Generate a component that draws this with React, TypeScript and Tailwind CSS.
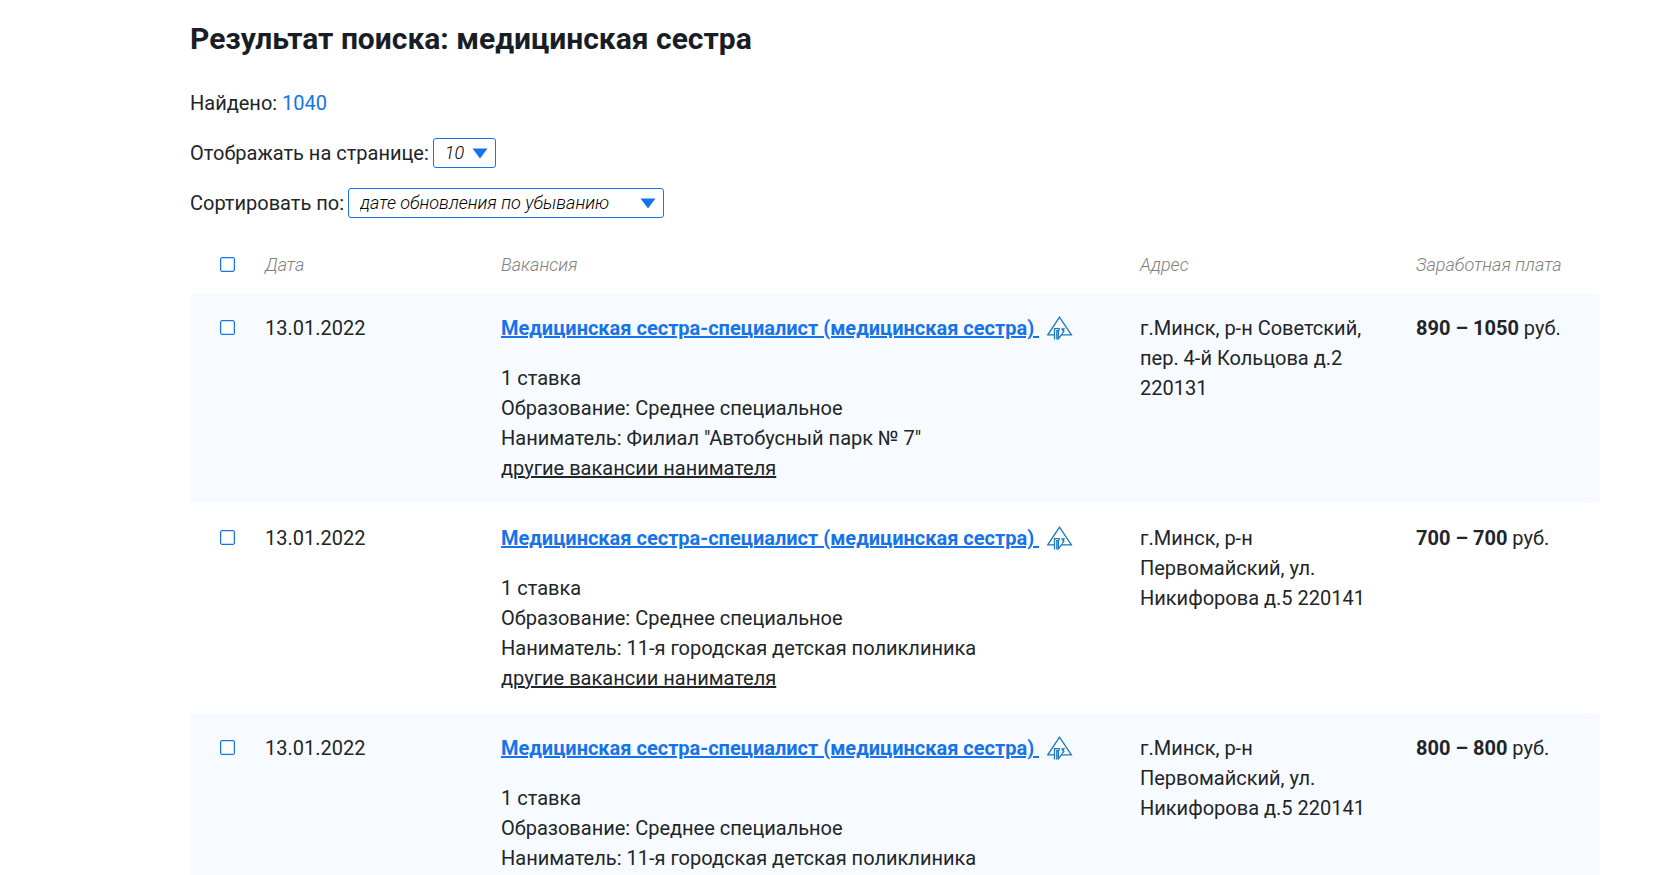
import { useState } from 'react';
import type { ReactNode } from 'react';

interface Vacancy {
  id: number;
  date: string;
  title: string;
  positions: string;
  education: string;
  employer: string;
  address: string;
  salary: string;
}

const vacancies: Vacancy[] = [
  {
    id: 1,
    date: '13.01.2022',
    title: 'Медицинская сестра-специалист (медицинская сестра)',
    positions: '1 ставка',
    education: 'Среднее специальное',
    employer: 'Филиал "Автобусный парк № 7"',
    address: 'г.Минск, р-н Советский, пер. 4-й Кольцова д.2 220131',
    salary: '890 – 1050',
  },
  {
    id: 2,
    date: '13.01.2022',
    title: 'Медицинская сестра-специалист (медицинская сестра)',
    positions: '1 ставка',
    education: 'Среднее специальное',
    employer: '11-я городская детская поликлиника',
    address: 'г.Минск, р-н Первомайский, ул. Никифорова д.5 220141',
    salary: '700 – 700',
  },
  {
    id: 3,
    date: '13.01.2022',
    title: 'Медицинская сестра-специалист (медицинская сестра)',
    positions: '1 ставка',
    education: 'Среднее специальное',
    employer: '11-я городская детская поликлиника',
    address: 'г.Минск, р-н Первомайский, ул. Никифорова д.5 220141',
    salary: '800 – 800',
  },
];

function EmploymentServiceIcon() {
  return (
    <svg
      className="ml-2 inline-block h-[25px] w-[26px] align-[-6px]"
      viewBox="0 0 26 25"
      fill="none"
      stroke="#1b78bd"
      strokeWidth="1.3"
      aria-hidden="true"
    >
      <path d="M7.5 18.8H0.8L12.5 1.2L24.4 18.8H14.4" />
      <path d="M7.5 23.5V12.6H12.2V14.6" />
      <path d="M9.8 23.5V14.6H11.4V22.6L15.6 17.4" />
      <path d="M14.2 12.8H17L15.8 14.4C17.6 14.8 17.2 16.6 15.2 16.5" />
    </svg>
  );
}

interface SelectProps {
  id: string;
  label: string;
  width: string;
  children: ReactNode;
}

function Select({ id, label, width, children }: SelectProps) {
  return (
    <div className="flex items-center gap-1">
      <label htmlFor={id}>{label}</label>
      <span className="relative flex">
        <select
          id={id}
          className={`h-[30px] appearance-none rounded-[3px] border border-[#1673ea] bg-white pr-7 pl-[11px] text-[18px] leading-7 font-light text-black italic ${width}`}
        >
          {children}
        </select>
        <svg className="pointer-events-none absolute top-[10px] right-2 h-[11px] w-4" viewBox="0 0 16 11" aria-hidden="true">
          <path d="M0.5 0.5H15.5L8 10.5Z" fill="#1673ea" />
        </svg>
      </span>
    </div>
  );
}

interface CheckboxProps {
  label: string;
  checked: boolean;
  onChange: () => void;
}

function Checkbox({ label, checked, onChange }: CheckboxProps) {
  return (
    <input
      type="checkbox"
      aria-label={label}
      checked={checked}
      onChange={onChange}
      className="block size-[15px] appearance-none rounded-[2px] border border-[#1673ea] bg-white inset-ring inset-ring-[#c5dcfa] checked:bg-[#1673ea]"
    />
  );
}

export default function App() {
  const [selected, setSelected] = useState<number[]>([]);
  const allSelected = selected.length === vacancies.length;

  const toggle = (id: number) =>
    setSelected((ids) => (ids.includes(id) ? ids.filter((i) => i !== id) : [...ids, id]));

  return (
    <main className="bg-white pr-[76px] pl-[190px] font-[Roboto,sans-serif] text-[20px] leading-[30px] text-[#212529]">
      <h1 className="pt-5 text-[30px] leading-[38px] font-bold text-[#181d26]">
        Результат поиска: медицинская сестра
      </h1>

      <div className="mt-[30px] flex flex-col gap-5">
        <p>
          Найдено: <span className="text-[#1673ea]">1040</span>
        </p>
        <Select id="per-page" label="Отображать на странице:" width="w-[63px]">
          <option>10</option>
          <option>20</option>
          <option>50</option>
        </Select>
        <Select id="sort" label="Сортировать по:" width="w-[316px]">
          <option>дате обновления по убыванию</option>
          <option>дате обновления по возрастанию</option>
        </Select>
      </div>

      <table className="mt-[31px] w-full table-fixed text-left">
        <colgroup>
          <col className="w-[75px]" />
          <col className="w-[236px]" />
          <col />
          <col className="w-[276px]" />
          <col className="w-[184px]" />
        </colgroup>
        <thead>
          <tr className="align-top text-[18px] text-[#808080] italic">
            <th className="pt-2 pb-[21px] pl-[30px]">
              <Checkbox
                label="Выбрать все"
                checked={allSelected}
                onChange={() => setSelected(allSelected ? [] : vacancies.map((v) => v.id))}
              />
            </th>
            <th className="pt-px font-light">Дата</th>
            <th className="pt-px font-light">Вакансия</th>
            <th className="pt-px font-light">Адрес</th>
            <th className="pt-px font-light">Заработная плата</th>
          </tr>
        </thead>
        <tbody>
          {vacancies.map((v) => (
            <tr key={v.id} className="align-top odd:bg-[#f7fbff]">
              <td className="rounded-l-[5px] pt-[27px] pl-[30px]">
                <Checkbox
                  label={`Выбрать вакансию ${v.id}`}
                  checked={selected.includes(v.id)}
                  onChange={() => toggle(v.id)}
                />
              </td>
              <td className="py-5">{v.date}</td>
              <td className="py-5">
                <div className="mb-5 h-[30px]">
                  <a href="#" className="font-bold whitespace-pre text-[#1673ea] underline">
                    {`${v.title} `}
                  </a>
                  <EmploymentServiceIcon />
                </div>
                <p>{v.positions}</p>
                <p>Образование: {v.education}</p>
                <p>Наниматель: {v.employer}</p>
                <a href="#" className="block underline">
                  другие вакансии нанимателя
                </a>
              </td>
              <td className="py-5 pr-10">{v.address}</td>
              <td className="rounded-r-[5px] py-5">
                <b>{v.salary}</b> руб.
              </td>
            </tr>
          ))}
        </tbody>
      </table>
    </main>
  );
}
